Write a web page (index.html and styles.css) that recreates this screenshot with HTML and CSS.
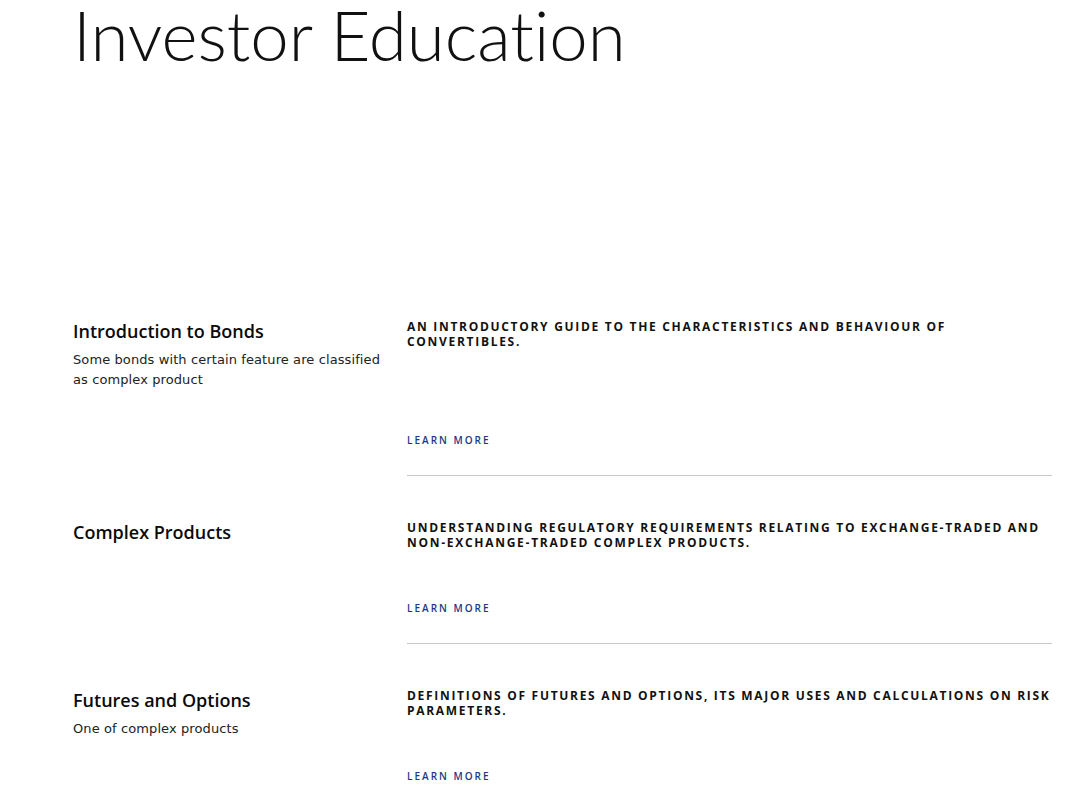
FILE: index.html
```html
<!DOCTYPE html>
<html lang="en">
<head>
<meta charset="utf-8">
<title>Investor Education</title>
<link rel="stylesheet" href="styles.css">
</head>
<body>
<main class="page">
  <h1 class="page-title">Investor Education</h1>
  <section class="edu-list">
    <article class="edu-item">
      <div class="edu-side">
        <h3 class="edu-title">Introduction to Bonds</h3>
        <p class="edu-desc">Some bonds with certain feature are classified as complex product</p>
      </div>
      <div class="edu-main edu-main--tall">
        <p class="edu-summary">An introductory guide to the characteristics and behaviour of convertibles.</p>
        <a class="edu-more" href="#">Learn more</a>
      </div>
    </article>
    <article class="edu-item">
      <div class="edu-side">
        <h3 class="edu-title">Complex Products</h3>
      </div>
      <div class="edu-main">
        <p class="edu-summary">Understanding regulatory requirements relating to exchange-traded and non&#8209;exchange&#8209;traded complex products.</p>
        <a class="edu-more" href="#">Learn more</a>
      </div>
    </article>
    <article class="edu-item">
      <div class="edu-side">
        <h3 class="edu-title">Futures and Options</h3>
        <p class="edu-desc">One of complex products</p>
      </div>
      <div class="edu-main">
        <p class="edu-summary">Definitions of futures and options, its major uses and calculations on risk parameters.</p>
        <a class="edu-more" href="#">Learn more</a>
      </div>
    </article>
  </section>
</main>
</body>
</html>
```
FILE: styles.css
```css
html, body {
  margin: 0;
  padding: 0;
  background: #ffffff;
}

.page {
  padding: 0 25px 0 73px;
  font-family: "Open Sans", "DejaVu Sans", sans-serif;
  color: #111111;
}

.page-title {
  margin: 0;
  font-family: "Lato", sans-serif;
  font-weight: 300;
  font-size: 69px;
  line-height: 1;
  color: #111111;
  font-variant-ligatures: none;
}

.edu-list {
  margin-top: 249px;
  display: flex;
  flex-direction: column;
}

.edu-item {
  display: grid;
  grid-template-columns: 334px 645px;
}

.edu-side {
  display: flex;
  flex-direction: column;
  gap: 6px;
}

.edu-item + .edu-item .edu-side,
.edu-item + .edu-item .edu-main {
  padding-top: 43px;
}

.edu-title {
  margin: 0;
  font-family: "Open Sans", sans-serif;
  font-weight: 600;
  font-size: 18px;
  line-height: 26px;
  color: #0a0a0a;
}

.edu-desc {
  margin: 0;
  width: 315px;
  font-family: "DejaVu Sans", sans-serif;
  font-size: 13px;
  line-height: 20px;
  letter-spacing: 0.1px;
  color: #222222;
}

.edu-main {
  display: flex;
  flex-direction: column;
  min-height: 96px;
  padding-bottom: 28px;
  border-bottom: 1px solid #c8c8c8;
}

.edu-main--tall {
  min-height: 129px;
}

.edu-summary {
  margin: 1px 0 0;
  font-family: "Open Sans", sans-serif;
  font-weight: 700;
  font-size: 12px;
  line-height: 15px;
  letter-spacing: 1.7px;
  text-transform: uppercase;
  color: #111111;
}

.edu-more {
  display: block;
  margin-top: auto;
  font-family: "Open Sans", sans-serif;
  font-weight: 600;
  font-size: 10px;
  line-height: 14px;
  letter-spacing: 2px;
  text-transform: uppercase;
  color: #1c3784;
  text-decoration: none;
}
```
